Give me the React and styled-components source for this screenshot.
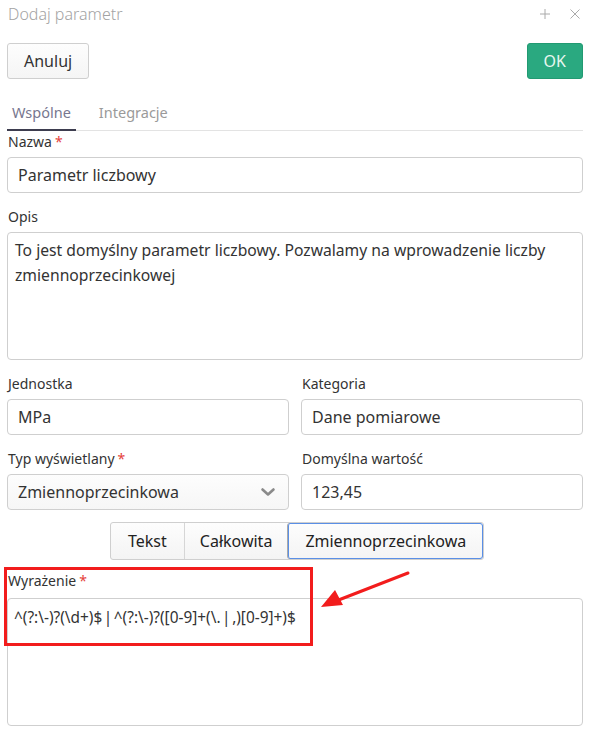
import React from "react";
import styled, { createGlobalStyle } from "styled-components";

const FONT = `"Noto Sans", "Open Sans", sans-serif`;

const Global = createGlobalStyle`
  html, body { margin: 0; padding: 0; background: #fff; }
  body { font-family: ${FONT}; color: #333; }
  * { box-sizing: border-box; }
`;

const Page = styled.div`
  position: relative;
  width: 591px;
  height: 737px;
  overflow: hidden;
  padding: 0 8px 0 7px;
`;

const Header = styled.div`
  display: flex;
  align-items: center;
  height: 28px;
  padding-left: 1px;
`;

const Title = styled.div`
  flex: 1;
  font-size: 16px;
  font-weight: 300;
  color: #a3a3a3;
`;

const HeaderIcons = styled.div`
  display: flex;
  gap: 18px;
  align-items: center;
  margin-right: 2px;
`;

const ButtonRow = styled.div`
  display: flex;
  justify-content: space-between;
  margin-top: 15px;
`;

const Button = styled.button`
  height: 36px;
  padding: 0 16px;
  font-family: ${FONT};
  font-size: 16px;
  border-radius: 3px;
  border: 1px solid ${(p) => (p.$primary ? "#229a72" : "#cfcfcf")};
  background: ${(p) =>
    p.$primary ? "#2aa980" : "linear-gradient(#fdfdfd, #f5f5f5)"};
  color: ${(p) => (p.$primary ? "#e8f7f0" : "#333")};
  cursor: pointer;
`;

const Tabs = styled.div`
  display: flex;
  margin-top: 16px;
  border-bottom: 1px solid #e3e3e3;
  height: 36px;
`;

const Tab = styled.div`
  padding: 0 5px;
  margin-right: 18px;
  line-height: 34px;
  font-size: 14.5px;
  color: ${(p) => (p.$active ? "#77778f" : "#9a9a9a")};
  border-bottom: 2px solid ${(p) => (p.$active ? "#3d3d4f" : "transparent")};
  margin-bottom: -1px;
`;

const Field = styled.div`
  display: flex;
  flex-direction: column;
  margin-top: ${(p) => p.$mt ?? 14}px;
  min-width: 0;
`;

const Label = styled.div`
  font-size: 14px;
  line-height: 20px;
  color: #333;
  margin-bottom: ${(p) => p.$mb ?? 5}px;
  padding-left: 1px;
`;

const Req = styled.span`
  color: #e5413b;
  margin-left: 3px;
`;

const Input = styled.div`
  height: 36px;
  border: 1px solid #cfcfcf;
  border-radius: 4px;
  padding: 0 10px;
  display: flex;
  align-items: center;
  font-size: 16px;
  color: #333;
  background: #fff;
`;

const Select = styled(Input)`
  justify-content: space-between;
  background: linear-gradient(#fdfdfd, #f6f6f6);
  padding-right: 12px;
`;

const Area = styled.div`
  height: 128px;
  border: 1px solid #cfcfcf;
  border-radius: 4px;
  padding: 5px 7px;
  font-size: 15.7px;
  line-height: 25px;
  color: #333;
`;

const Grid = styled.div`
  display: grid;
  grid-template-columns: 1fr 1fr;
  column-gap: 12px;
`;

const SegWrap = styled.div`
  display: flex;
  margin-top: 12px;
  padding-left: 103px;
`;

const Seg = styled.div`
  display: flex;
  border: 1px solid #cfcfcf;
  border-radius: 3px;
  overflow: hidden;
  background: linear-gradient(#fdfdfd, #f4f4f4);
`;

const SegItem = styled.div`
  height: 36px;
  display: flex;
  align-items: center;
  padding: 0 ${(p) => p.$pad}px;
  font-size: 16px;
  color: #222;
  border-left: ${(p) => (p.$first ? "none" : "1px solid #d6d6d6")};
  ${(p) =>
    p.$active &&
    `box-shadow: inset 0 0 0 1px #5a8fe6; border-left-color: #aaa; border-radius: 3px;`}
`;

const Expr = styled(Area)`
  padding: 4px 6px;
  font-size: 15.4px;
  line-height: 30px;
`;

const Annot = styled.div`
  position: absolute;
  left: 4px;
  top: 567px;
  width: 309px;
  height: 79px;
  border: 3px solid #f21c1c;
  pointer-events: none;
`;

const Arrow = styled.svg`
  position: absolute;
  left: 318px;
  top: 568px;
  pointer-events: none;
`;

const Chevron = () => (
  <svg width="16" height="10" viewBox="0 0 16 10">
    <path d="M2.5 2.5 L8 7.5 L13.5 2.5" fill="none" stroke="#8a8a8a" strokeWidth="2.6" strokeLinecap="round" strokeLinejoin="round" />
  </svg>
);

export default function App() {
  return (
    <>
      <Global />
      <Page>
        <Header>
          <Title>Dodaj parametr</Title>
          <HeaderIcons>
            <svg width="12" height="12" viewBox="0 0 12 12">
              <path d="M6 1v10M1 6h10" stroke="#aaa" strokeWidth="1" />
            </svg>
            <svg width="12" height="12" viewBox="0 0 12 12">
              <path d="M1.5 1.5l9 9M10.5 1.5l-9 9" stroke="#aaa" strokeWidth="1" />
            </svg>
          </HeaderIcons>
        </Header>
        <ButtonRow>
          <Button>Anuluj</Button>
          <Button $primary>OK</Button>
        </ButtonRow>
        <Tabs>
          <Tab $active>Wspólne</Tab>
          <Tab>Integracje</Tab>
        </Tabs>
        <Field $mt={1}>
          <Label>
            Nazwa<Req>*</Req>
          </Label>
          <Input>Parametr liczbowy</Input>
        </Field>
        <Field>
          <Label>Opis</Label>
          <Area>
            To jest domyślny parametr liczbowy. Pozwalamy na wprowadzenie liczby zmiennoprzecinkowej
          </Area>
        </Field>
        <Grid>
          <Field>
            <Label>Jednostka</Label>
            <Input>MPa</Input>
          </Field>
          <Field>
            <Label>Kategoria</Label>
            <Input>Dane pomiarowe</Input>
          </Field>
          <Field>
            <Label>
              Typ wyświetlany<Req>*</Req>
            </Label>
            <Select>
              Zmiennoprzecinkowa
              <Chevron />
            </Select>
          </Field>
          <Field>
            <Label>Domyślna wartość</Label>
            <Input>123,45</Input>
          </Field>
        </Grid>
        <SegWrap>
          <Seg>
            <SegItem $first $pad={17}>Tekst</SegItem>
            <SegItem $pad={15}>Całkowita</SegItem>
            <SegItem $active $pad={17}>Zmiennoprzecinkowa</SegItem>
          </Seg>
        </SegWrap>
        <Field $mt={11}>
          <Label $mb={7}>
            Wyrażenie<Req>*</Req>
          </Label>
          <Expr>{"^(?:\\-)?(\\d+)$\u200a|\u200a^(?:\\-)?([0-9]+(\\.\u200a|\u200a,)[0-9]+)$"}</Expr>
        </Field>
        <Annot />
        <Arrow width="95" height="42" viewBox="0 0 95 42">
          <line x1="90" y1="5" x2="18" y2="33" stroke="#f21c1c" strokeWidth="3" strokeLinecap="round" />
          <polygon points="3,39 17,22 25,37" fill="#f21c1c" />
        </Arrow>
      </Page>
    </>
  );
}
